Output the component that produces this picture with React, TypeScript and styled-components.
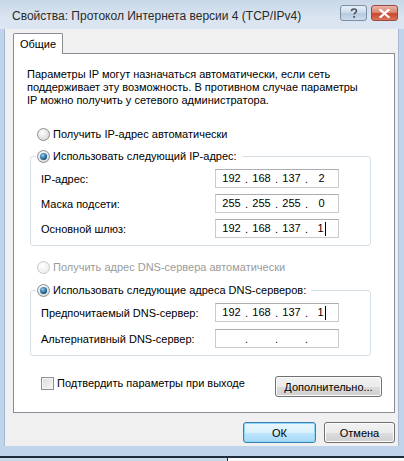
import React from "react";
import styled, { createGlobalStyle, css } from "styled-components";

const GlobalStyle = createGlobalStyle`
  html, body {
    margin: 0;
    padding: 0;
    background: #c5d9ee;
  }
  body {
    font-family: "Liberation Sans", Tahoma, Arial, sans-serif;
    font-size: 11px;
    color: #000;
  }
`;

const Window = styled.div`
  width: 404px;
  height: 461px;
  display: flex;
  flex-direction: column;
  background: #c0d4eb;
  overflow: hidden;
`;

const TitleBar = styled.div`
  height: 29px;
  flex: none;
  display: flex;
  align-items: flex-start;
  padding: 0 6px 0 12px;
  background: linear-gradient(#c8d7e8, #d9e4f0 60%, #dce6f2);
`;

const Title = styled.div`
  flex: 1;
  padding-top: 8px;
  font-size: 12px;
  line-height: 16px;
  color: #2a2a2a;
  white-space: nowrap;
`;

const CaptionButton = styled.div<{ $close?: boolean }>`
  width: 27px;
  height: 16px;
  margin-top: 5px;
  margin-left: 4px;
  border-radius: 3px;
  display: flex;
  align-items: center;
  justify-content: center;
  box-sizing: border-box;
  border: 1px solid #7a8ea6;
  ${(p) =>
    p.$close
      ? css`
          border-color: #9a4a3d;
          background: linear-gradient(#eab3a6, #db8a76 45%, #c8452c 55%, #d8765c);
        `
      : css`
          background: linear-gradient(#e6eef7, #cfdcea 45%, #b7c9de 55%, #cbdbeb);
        `}
`;

const Client = styled.div`
  flex: 1;
  margin: 0 5px 0 4px;
  padding: 4px 3px 3px 8px;
  background: #f0f0f0;
  display: flex;
  flex-direction: column;
  border-left: 1px solid #a6b9d0;
  border-right: 1px solid #a6b9d0;
`;

const TabStrip = styled.div`
  display: flex;
  position: relative;
  z-index: 1;
  margin-bottom: -1px;
`;

const Tab = styled.div`
  height: 21px;
  padding: 0 8px;
  width: 50px;
  box-sizing: border-box;
  display: flex;
  align-items: center;
  justify-content: center;
  border: 1px solid #898c95;
  border-bottom: none;
  border-radius: 2px 2px 0 0;
  background: #fff;
  font-size: 11px;
`;

const Panel = styled.div`
  border: 1px solid #898c95;
  background: #fff;
  display: flex;
  flex-direction: column;
  padding: 14px 12px 15px 13px;
`;

const Description = styled.p`
  margin: 0;
  line-height: 13px;
  font-size: 11px;
`;

const OptionRow = styled.div<{ $disabled?: boolean; $top: number }>`
  display: flex;
  align-items: center;
  gap: 3px;
  height: 14px;
  margin: ${(p) => p.$top}px 0 0 10px;
  color: ${(p) => (p.$disabled ? "#9b9b9b" : "#000")};
  white-space: nowrap;
`;

const RadioCircle = styled.span<{ $checked?: boolean; $disabled?: boolean }>`
  width: 13px;
  height: 13px;
  box-sizing: border-box;
  border-radius: 50%;
  border: 1px solid ${(p) => (p.$disabled ? "#c9c9c9" : "#8f8f8f")};
  background: ${(p) =>
    p.$disabled
      ? "radial-gradient(circle at 40% 35%, #fdfdfd, #e9e9e9)"
      : "radial-gradient(circle at 40% 35%, #ffffff, #d6d6d6 80%)"};
  display: flex;
  align-items: center;
  justify-content: center;
  flex: none;
  &::after {
    content: "";
    display: ${(p) => (p.$checked ? "block" : "none")};
    width: 7px;
    height: 7px;
    border-radius: 50%;
    background: radial-gradient(circle at 40% 35%, #8fd0f2, #1f5f8f 60%, #0d3a63);
  }
`;

const Group = styled.fieldset<{ $top: number }>`
  margin: ${(p) => p.$top}px 11px 0 3px;
  padding: 6px 10px 7px 10px;
  border: 1px solid #d5dfe5;
  border-radius: 3px;
  min-width: 0;
`;

const Legend = styled.legend`
  padding: 0 5px 0 1px;
  margin-left: -5px;
  height: 14px;
  display: flex;
  align-items: center;
  gap: 3px;
  white-space: nowrap;
`;

const FieldList = styled.div<{ $gap: number }>`
  display: flex;
  flex-direction: column;
  gap: ${(p) => p.$gap}px;
`;

const FieldRow = styled.div`
  display: flex;
  align-items: center;
  height: 19px;
`;

const FieldLabel = styled.span`
  width: 174px;
  flex: none;
  white-space: nowrap;
`;

const IpBox = styled.div`
  width: 124px;
  height: 19px;
  box-sizing: border-box;
  border: 1px solid #c8ccd2;
  border-top-color: #abadb3;
  background: #fff;
  display: flex;
  align-items: center;
  justify-content: center;
  padding-right: 1px;
`;

const Octet = styled.span`
  width: 27px;
  text-align: center;
  font-size: 11px;
  line-height: 13px;
  display: inline-flex;
  justify-content: center;
  align-items: center;
`;

const Dot = styled.span`
  width: 3px;
  text-align: center;
  font-size: 11px;
`;

const Caret = styled.span`
  display: inline-block;
  width: 1px;
  height: 14px;
  background: #000;
  margin-left: 1px;
`;

const BottomRow = styled.div`
  margin-top: 20px;
  padding-left: 14px;
  display: flex;
  align-items: flex-start;
  justify-content: space-between;
`;

const CheckRow = styled.label`
  display: flex;
  align-items: center;
  gap: 3px;
  height: 14px;
  white-space: nowrap;
`;

const CheckBox = styled.span`
  width: 13px;
  height: 13px;
  box-sizing: border-box;
  border: 1px solid #8f8f8f;
  background: linear-gradient(135deg, #dcdcdc, #f6f6f6);
  box-shadow: inset 0 0 0 1px #f4f4f4;
  flex: none;
`;

const Button = styled.button<{ $default?: boolean; $w: number }>`
  width: ${(p) => p.$w}px;
  height: 21px;
  margin: 0;
  padding: 0;
  font-family: "Liberation Sans", Tahoma, Arial, sans-serif;
  font-weight: 400;
  font-size: 11px;
  color: #000;
  border-radius: 3px;
  border: 1px solid ${(p) => (p.$default ? "#3c7fb1" : "#707070")};
  background: ${(p) =>
    p.$default
      ? "linear-gradient(#eaf6fd, #d9f0fc 50%, #bee6fd 50%, #a7d9f5)"
      : "linear-gradient(#f2f2f2, #ebebeb 50%, #dddddd 50%, #cfcfcf)"};
  box-shadow: inset 0 0 0 1px ${(p) => (p.$default ? "#8fd6f8" : "#fcfcfc")};
`;

const Footer = styled.div`
  margin-top: 9px;
  display: flex;
  justify-content: flex-end;
  gap: 8px;
`;

const BottomFrame = styled.div`
  height: 10px;
  flex: none;
  background: #c0d4eb;
`;

const Taskbar = styled.div`
  height: 5px;
  flex: none;
  display: flex;
  border-top: 2px solid #1d2b3a;
`;

const TaskSegment = styled.div<{ $light?: boolean }>`
  flex: ${(p) => (p.$light ? 1 : "none")};
  width: ${(p) => (p.$light ? "auto" : "227px")};
  background: ${(p) => (p.$light ? "#fafafa" : "#c9dcee")};
  border-right: ${(p) => (p.$light ? "none" : "1px solid #1d2b3a")};
`;

const HelpGlyph = () => (
  <svg width="10" height="11" viewBox="0 0 10 11">
    <path
      d="M2.5 3.2 C2.5 1.6 3.6 1 5 1 C6.5 1 7.5 1.8 7.5 3.1 C7.5 4.5 5.2 4.7 5.2 6.6"
      fill="none"
      stroke="#4a5563"
      strokeWidth="1.6"
    />
    <rect x="4.3" y="8" width="1.8" height="1.8" fill="#4a5563" />
  </svg>
);

const CloseGlyph = () => (
  <svg width="11" height="9" viewBox="0 0 11 9">
    <path d="M1.5 1 L9.5 8 M9.5 1 L1.5 8" stroke="#fff" strokeWidth="2.2" strokeLinecap="square" />
  </svg>
);

type IpProps = { parts: string[]; caret?: boolean };

const IpField = ({ parts, caret }: IpProps) => (
  <IpBox>
    {parts.map((part, i) => (
      <React.Fragment key={i}>
        {i > 0 && <Dot>.</Dot>}
        <Octet>
          {part}
          {caret && i === parts.length - 1 && <Caret />}
        </Octet>
      </React.Fragment>
    ))}
  </IpBox>
);

const App = () => {
  return (
    <>
      <GlobalStyle />
      <Window>
        <TitleBar>
          <Title>Свойства: Протокол Интернета версии 4 (TCP/IPv4)</Title>
          <CaptionButton>
            <HelpGlyph />
          </CaptionButton>
          <CaptionButton $close>
            <CloseGlyph />
          </CaptionButton>
        </TitleBar>
        <Client>
          <TabStrip>
            <Tab>Общие</Tab>
          </TabStrip>
          <Panel>
            <Description>
              Параметры IP могут назначаться автоматически, если сеть
              <br />
              поддерживает эту возможность. В противном случае параметры
              <br />
              IP можно получить у сетевого администратора.
            </Description>

            <OptionRow $top={20}>
              <RadioCircle />
              Получить IP-адрес автоматически
            </OptionRow>

            <Group $top={8}>
              <Legend>
                <RadioCircle $checked />
                Использовать следующий IP-адрес:
              </Legend>
              <FieldList $gap={6}>
                <FieldRow>
                  <FieldLabel>IP-адрес:</FieldLabel>
                  <IpField parts={["192", "168", "137", "2"]} />
                </FieldRow>
                <FieldRow>
                  <FieldLabel>Маска подсети:</FieldLabel>
                  <IpField parts={["255", "255", "255", "0"]} />
                </FieldRow>
                <FieldRow>
                  <FieldLabel>Основной шлюз:</FieldLabel>
                  <IpField parts={["192", "168", "137", "1"]} caret />
                </FieldRow>
              </FieldList>
            </Group>

            <OptionRow $top={14} $disabled>
              <RadioCircle $disabled />
              Получить адрес DNS-сервера автоматически
            </OptionRow>

            <Group $top={9}>
              <Legend>
                <RadioCircle $checked />
                Использовать следующие адреса DNS-серверов:
              </Legend>
              <FieldList $gap={7}>
                <FieldRow>
                  <FieldLabel>Предпочитаемый DNS-сервер:</FieldLabel>
                  <IpField parts={["192", "168", "137", "1"]} caret />
                </FieldRow>
                <FieldRow>
                  <FieldLabel>Альтернативный DNS-сервер:</FieldLabel>
                  <IpField parts={["", "", "", ""]} />
                </FieldRow>
              </FieldList>
            </Group>

            <BottomRow>
              <CheckRow>
                <CheckBox />
                Подтвердить параметры при выходе
              </CheckRow>
              <Button $w={107}>Дополнительно...</Button>
            </BottomRow>
          </Panel>
          <Footer>
            <Button $default $w={73}>
              ОК
            </Button>
            <Button $w={71}>Отмена</Button>
          </Footer>
        </Client>
        <BottomFrame />
        <Taskbar>
          <TaskSegment />
          <TaskSegment $light />
        </Taskbar>
      </Window>
    </>
  );
};

export default App;
